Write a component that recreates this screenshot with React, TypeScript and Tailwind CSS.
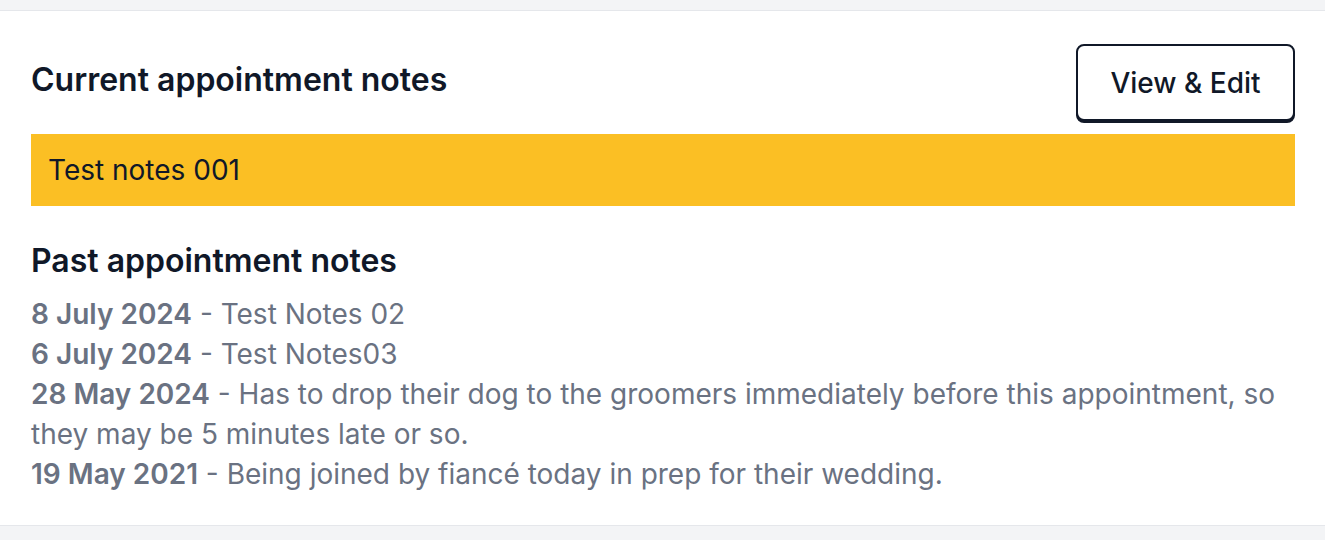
const pastNotes = [
  { date: '8 July 2024', text: 'Test Notes 02' },
  { date: '6 July 2024', text: 'Test Notes03' },
  {
    date: '28 May 2024',
    text: 'Has to drop their dog to the groomers immediately before this appointment, so they may be 5 minutes late or so.',
  },
  { date: '19 May 2021', text: 'Being joined by fiancé today in prep for their wedding.' },
];

export default function App() {
  return (
    <div
      className="min-h-[540px] bg-gray-100 pt-[10px] pb-[14px]"
      style={{ fontFamily: 'Inter, "Noto Sans", sans-serif' }}
    >
      <div className="border-y border-gray-200 bg-white pl-[31px] pr-[30px] pt-[33px] pb-[31px]">
        {/* Header */}
        <div className="flex items-center justify-between">
          <h2 className="pb-[5px] text-[32px] font-semibold leading-[40px] text-gray-900">
            Current appointment notes
          </h2>
          <button className="h-[77px] w-[219px] rounded-[8px] border-2 border-gray-900 bg-white text-[28px] font-medium leading-[40px] text-gray-900 shadow-[0_2px_0_0_#111827]">
            View &amp; Edit
          </button>
        </div>

        {/* Current note */}
        <div className="mt-[13px] bg-[#fbbf24] px-[17px] py-[16px] text-[28px] leading-[40px] text-gray-900">
          Test notes 001
        </div>

        {/* Past notes */}
        <h3 className="mt-[35px] text-[32px] font-semibold leading-[40px] text-gray-900">
          Past appointment notes
        </h3>
        <ul className="mt-[13px] text-[28px] leading-[40px] text-gray-500">
          {pastNotes.map(note => (
            <li key={note.date}>
              <span className="font-semibold">{note.date}</span> - {note.text}
            </li>
          ))}
        </ul>
      </div>
    </div>
  );
}
